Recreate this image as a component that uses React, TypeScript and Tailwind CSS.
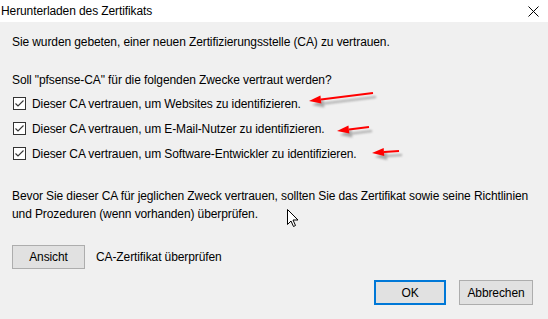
import React from 'react';

const purposes = [
  'Dieser CA vertrauen, um Websites zu identifizieren.',
  'Dieser CA vertrauen, um E-Mail-Nutzer zu identifizieren.',
  'Dieser CA vertrauen, um Software-Entwickler zu identifizieren.',
];

// red annotation arrows: tail -> tip
const arrows = [
  { x1: 373, y1: 93, x2: 309, y2: 101 },
  { x1: 369, y1: 127, x2: 337, y2: 131 },
  { x1: 399, y1: 151, x2: 372, y2: 153 },
];

function Checkbox() {
  return (
    <span className="flex h-[13px] w-[13px] shrink-0 items-center justify-center border border-[#333333] bg-white">
      <svg width="11" height="11" viewBox="0 0 11 11">
        <path d="M1.5 5.5 L4 8 L9.5 2.5" fill="none" stroke="#333333" strokeWidth="1.1" />
      </svg>
    </span>
  );
}

function Arrow({ x1, y1, x2, y2 }: { x1: number; y1: number; x2: number; y2: number }) {
  const a = Math.atan2(y2 - y1, x2 - x1);
  const len = 12;
  const w = 4;
  const bx = x2 - Math.cos(a) * len;
  const by = y2 - Math.sin(a) * len;
  const px = -Math.sin(a) * w;
  const py = Math.cos(a) * w;
  const head = `${x2},${y2} ${bx + px},${by + py} ${bx - px},${by - py}`;
  return (
    <g>
      <g transform="translate(3 4)" opacity="0.45" filter="url(#blur)">
        <line x1={x1} y1={y1} x2={bx} y2={by} stroke="#555" strokeWidth="2" />
        <polygon points={head} fill="#555" />
      </g>
      <line x1={x1} y1={y1} x2={bx} y2={by} stroke="#ff0000" strokeWidth="2" />
      <polygon points={head} fill="#ff0000" />
    </g>
  );
}

export default function App() {
  return (
    <div
      className="relative h-[319px] w-[548px] overflow-hidden bg-[#f0f0f0] text-[12px] tracking-[-0.1px] text-black"
      style={{ fontFamily: '"Liberation Sans", Arial, sans-serif' }}
    >
      <div className="flex h-[22px] items-center justify-between bg-white pl-[1px] pr-[9px]">
        <span className="leading-4">Herunterladen des Zertifikats</span>
        <svg width="11" height="11" viewBox="0 0 11 11">
          <path d="M0.5 0.5 L10.5 10.5 M10.5 0.5 L0.5 10.5" stroke="#000" strokeWidth="1" />
        </svg>
      </div>

      <div className="flex flex-col px-[12px]">
        <p className="mt-[12px] leading-4">Sie wurden gebeten, einer neuen Zertifizierungsstelle (CA) zu vertrauen.</p>
        <p className="mt-[22px] leading-4">Soll "pfsense-CA" für die folgenden Zwecke vertraut werden?</p>

        <div className="mt-[3px] flex flex-col">
          {purposes.map((p) => (
            <label key={p} className="flex h-[25px] items-center gap-[6px] pl-[1px]">
              <Checkbox />
              <span className="leading-4">{p}</span>
            </label>
          ))}
        </div>

        <p className="mt-[21px] whitespace-nowrap leading-[18px]">
          Bevor Sie dieser CA für jeglichen Zweck vertrauen, sollten Sie das Zertifikat sowie seine Richtlinien
          <br />
          und Prozeduren (wenn vorhanden) überprüfen.
        </p>

        <div className="mt-[22px] flex items-center gap-[11px]">
          <button className="h-[24px] w-[73px] border border-[#adadad] bg-[#e1e1e1]">Ansicht</button>
          <span>CA-Zertifikat überprüfen</span>
        </div>

        <div className="mt-[11px] flex justify-end gap-[13px] pr-[3px]">
          <button className="h-[25px] w-[72px] border-2 border-[#0078d7] bg-[#e1e1e1]">OK</button>
          <button className="h-[25px] w-[74px] border border-[#adadad] bg-[#e1e1e1]">Abbrechen</button>
        </div>
      </div>

      <svg className="pointer-events-none absolute left-0 top-0" width="548" height="319">
        <defs>
          <filter id="blur" x="-20%" y="-50%" width="140%" height="200%">
            <feGaussianBlur stdDeviation="1.2" />
          </filter>
        </defs>
        {arrows.map((a, i) => (
          <Arrow key={i} {...a} />
        ))}
        {/* mouse pointer */}
        <path
          d="M287.5 209.5 L287.5 224.5 L291 221 L293.5 226.5 L295.5 225.5 L293 220 L298 220 Z"
          fill="#fff"
          stroke="#000"
          strokeWidth="1"
          strokeLinejoin="round"
        />
      </svg>
    </div>
  );
}
